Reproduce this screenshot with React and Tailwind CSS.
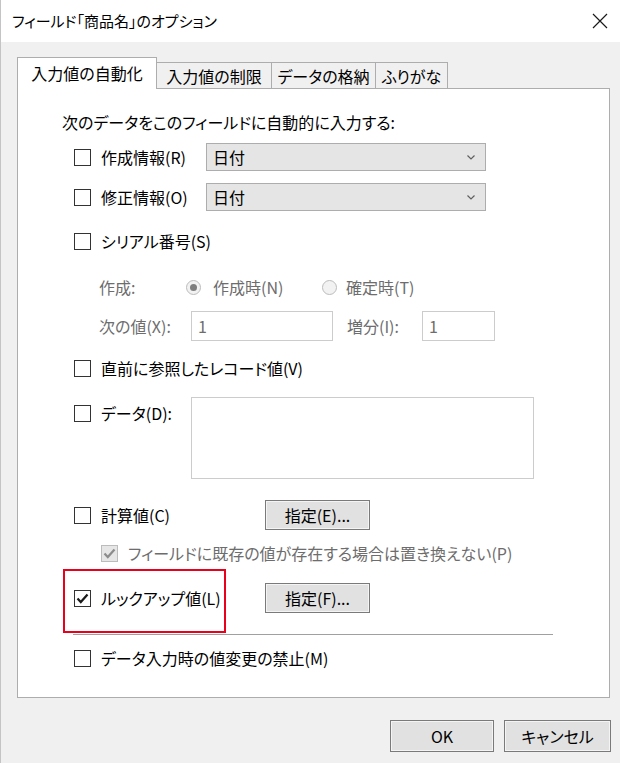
import React from 'react';

const font = "font-['Noto_Sans_CJK_JP','Noto_Sans',sans-serif] [font-feature-settings:'palt']";

const CheckBox = ({ checked, disabled }) => (
    <span
        className={`flex h-[17px] w-[17px] shrink-0 items-center justify-center border ${
            disabled ? 'border-[#bcbcbc] bg-[#e6e6e6]' : 'border-[#333333] bg-white'
        }`}
    >
        {checked && (
            <svg width="13" height="11" viewBox="0 0 13 11">
                <path
                    d="M1.5 5.5 L4.8 9 L11.5 1.5"
                    fill="none"
                    stroke={disabled ? '#8c8c8c' : '#1a1a1a'}
                    strokeWidth="2.2"
                />
            </svg>
        )}
    </span>
);

const Check = ({ label, checked, disabled, width }) => (
    <div className="flex shrink-0 items-center" style={width ? { width } : undefined}>
        <CheckBox checked={checked} disabled={disabled} />
        <span className={`ml-[10px] whitespace-nowrap ${disabled ? 'text-[#6d6d6d]' : 'text-black'}`}>{label}</span>
    </div>
);

const Radio = ({ selected }) => (
    <span className="flex h-[15px] w-[15px] shrink-0 items-center justify-center rounded-full border border-[#bcbcbc] bg-[#f2f2f2]">
        {selected && <span className="h-[7px] w-[7px] rounded-full bg-[#7f7f7f]" />}
    </span>
);

const Select = () => (
    <div className="flex h-[28px] w-[280px] items-center justify-between border border-[#adadad] bg-[#e5e5e5] pl-[6px] pr-[10px]">
        <span>日付</span>
        <svg width="8" height="5" viewBox="0 0 8 5">
            <path d="M0.5 0.5 L4 4 L7.5 0.5" fill="none" stroke="#606060" strokeWidth="1.2" />
        </svg>
    </div>
);

const Button = ({ children, className = '' }) => (
    <div
        className={`flex items-center justify-center border border-[#7a7a7a] bg-[#e1e1e1] text-black shadow-[inset_0_0_0_1px_#f4f4f4] ${className}`}
    >
        {children}
    </div>
);

const tabs = [
    { label: '入力値の自動化', w: 'w-[140px]', active: true },
    { label: '入力値の制限', w: 'w-[115px]' },
    { label: 'データの格納', w: 'w-[104px]' },
    { label: 'ふりがな', w: 'w-[72px]' },
];

export default function App() {
    return (
        <div className={`${font} flex h-[763px] w-[620px] flex-col border-l border-[#c4c4c4] bg-[#f0f0f0] text-[16px] leading-[20px] text-black`}>
            {/* title bar */}
            <div className="flex h-[42px] shrink-0 items-center justify-between bg-white pl-[11px] pr-[12px]">
                <span className="text-[15px]">フィールド「商品名」のオプション</span>
                <svg width="16" height="16" viewBox="0 0 16 16">
                    <path d="M1 1 L15 15 M15 1 L1 15" stroke="#1a1a1a" strokeWidth="1.2" />
                </svg>
            </div>

            {/* tabs */}
            <div className="flex items-end pl-[16px] pt-[15px]">
                {tabs.map((t) =>
                    t.active ? (
                        <div
                            key={t.label}
                            className={`${t.w} relative z-10 -mb-px flex h-[32px] items-center justify-center border border-b-0 border-[#adadad] bg-white pb-[2px]`}
                        >
                            {t.label}
                        </div>
                    ) : (
                        <div
                            key={t.label}
                            className={`${t.w} flex h-[26px] items-center justify-center border border-b-0 border-l-0 border-[#adadad] bg-[#f0f0f0]`}
                        >
                            {t.label}
                        </div>
                    )
                )}
            </div>

            {/* panel */}
            <div className="relative ml-[16px] h-[610px] w-[593px] border border-[#adadad] bg-white pl-[44px]">
                <div className="mt-[23px] flex h-[20px] items-center">次のデータをこのフィールドに自動的に入力する:</div>

                <div className="ml-[12px] mt-[11px] flex h-[28px] items-center">
                    <Check label="作成情報(R)" width={132} />
                    <Select />
                </div>

                <div className="ml-[12px] mt-[12px] flex h-[28px] items-center">
                    <Check label="修正情報(O)" width={132} />
                    <Select />
                </div>

                <div className="ml-[12px] mt-[20px] flex h-[20px] items-center">
                    <Check label="シリアル番号(S)" />
                </div>

                <div className="ml-[37px] mt-[26px] flex h-[20px] items-center text-[#6d6d6d]">
                    <span className="w-[87px] shrink-0">作成:</span>
                    <div className="flex w-[136px] shrink-0 items-center">
                        <Radio selected />
                        <span className="ml-[12px]">作成時(N)</span>
                    </div>
                    <Radio />
                    <span className="ml-[9px]">確定時(T)</span>
                </div>

                <div className="ml-[37px] mt-[14px] flex h-[30px] items-center text-[#6d6d6d]">
                    <span className="w-[92px] shrink-0">次の値(X):</span>
                    <div className="flex h-[30px] w-[142px] items-center border border-[#cccccc] bg-white pl-[6px]">1</div>
                    <span className="ml-[14px] w-[75px] shrink-0">増分(I):</span>
                    <div className="flex h-[30px] w-[73px] items-center border border-[#cccccc] bg-white pl-[6px]">1</div>
                </div>

                <div className="ml-[12px] mt-[17px] flex h-[20px] items-center">
                    <Check label="直前に参照したレコード値(V)" />
                </div>

                <div className="ml-[12px] mt-[19px] flex items-start">
                    <div className="mt-[6px]">
                        <Check label="データ(D):" width={117} />
                    </div>
                    <div className="h-[82px] w-[343px] border border-[#cccccc] bg-white" />
                </div>

                <div className="ml-[12px] mt-[21px] flex h-[30px] items-center">
                    <Check label="計算値(C)" width={191} />
                    <Button className="h-[30px] w-[105px]">指定(E)...</Button>
                </div>

                <div className="ml-[39px] mt-[13px] flex h-[20px] items-center">
                    <Check label="フィールドに既存の値が存在する場合は置き換えない(P)" checked disabled />
                </div>

                <div className="ml-[12px] mt-[20px] flex h-[30px] items-center">
                    <Check label="ルックアップ値(L)" checked width={191} />
                    <Button className="h-[30px] w-[105px]">指定(F)...</Button>
                </div>

                <div className="ml-[11px] mt-[21px] h-px w-[480px] bg-[#a0a0a0]" />

                <div className="ml-[12px] mt-[13px] flex h-[20px] items-center">
                    <Check label="データ入力時の値変更の禁止(M)" />
                </div>

                {/* annotation */}
                <div className="pointer-events-none absolute left-[45px] top-[480px] h-[64px] w-[163px] border-2 border-[#e8001c]" />
            </div>

            {/* footer buttons */}
            <div className="mt-[22px] flex justify-end gap-[10px] pr-[9px]">
                <Button className="h-[32px] w-[104px]">OK</Button>
                <Button className="h-[32px] w-[107px]">キャンセル</Button>
            </div>
        </div>
    );
}
